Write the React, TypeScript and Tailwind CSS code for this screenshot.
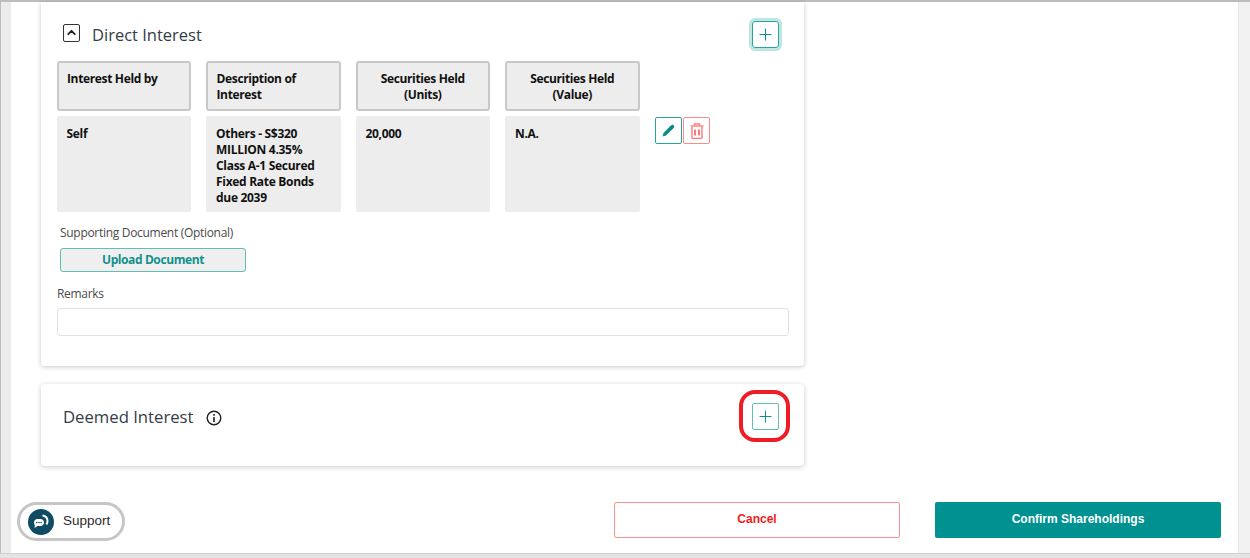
import React from "react";
import { ChevronUp, Plus, Pencil } from "lucide-react";

const headers = [
  { label: "Interest Held by", left: true },
  { label: "Description of Interest", left: true },
  { label: "Securities Held (Units)", left: false },
  { label: "Securities Held (Value)", left: false },
];

const row = ["Self", "Others - S$320 MILLION 4.35% Class A-1 Secured Fixed Rate Bonds due 2039", "20,000", "N.A."];

const TrashIcon = () => (
  <svg width="14" height="16" viewBox="0 0 14 16" fill="none" stroke="#ff7b7b" strokeWidth="1.4">
    <path d="M0.5 3h13" />
    <path d="M4.5 2.6V1h5v1.6" />
    <path d="M2 3.4v11c0 .6.4 1 1 1h8c.6 0 1-.4 1-1v-11" />
    <path d="M5 6.5v6M9 6.5v6" strokeWidth="2" />
  </svg>
);

const SupportIcon = () => (
  <svg width="26" height="26" viewBox="0 0 26 26">
    <circle cx="13" cy="13" r="13" fill="#0f4c64" />
    <path d="M6 13.500c0-2 1.500-3.500 3.500-3.500h3c2 0 3.500 1.500 3.500 3.500s-1.500 3.500-3.500 3.500h-3L6.500 19l.4-3C6.300 15.400 6 14.500 6 13.500z" fill="#ffffff" />
    <circle cx="8.800" cy="13.500" r=".8" fill="#0f4c64" />
    <circle cx="11" cy="13.500" r=".8" fill="#0f4c64" />
    <circle cx="13.200" cy="13.500" r=".8" fill="#0f4c64" />
    <path d="M14.500 6.500c3 .4 5 2.600 5 5.500 0 1.300-.4 2.500-1.100 3.500" fill="none" stroke="#ffffff" strokeWidth="2" />
  </svg>
);

const App: React.FC = () => {
  return (
    <div className="w-[1250px] h-[558px] overflow-hidden flex flex-col bg-[#ececec] font-['Open_Sans',sans-serif]">
      <div className="h-[2px] bg-[#bdbdbd] shrink-0" />
      <div className="flex flex-1 min-h-0">
        <div className="w-[1px] bg-[#bdbdbd] shrink-0" />
        <div className="w-[10px] bg-[#ececec] shrink-0" />
        <div className="w-[1227px] bg-white flex flex-col">
          <div className="ml-[30px] w-[763px] h-[364px] bg-white rounded-b-[4px] shadow-[0_1px_5px_rgba(0,0,0,0.22)] pl-[16px] pt-[17px]">
            <div className="flex items-center h-[30px] pr-[25px] justify-between">
              <div className="flex items-center pl-[6px] mt-[2px]">
                <span className="w-[17px] h-[18px] border border-[#333] rounded-[2px] flex items-center justify-center mb-[5px]">
                  <ChevronUp size={13} strokeWidth={3.5} className="text-[#222]" />
                </span>
                <span className="ml-[12px] text-[16.5px] text-[#333d47]">Direct Interest</span>
              </div>
              <button className="w-[27px] h-[27px] border border-[#2aa39e] rounded-[3px] ring-[3px] ring-[#bfe6e4] flex items-center justify-center">
                <Plus size={19} strokeWidth={1.4} className="text-[#12918d]" />
              </button>
            </div>

            <div className="flex mt-[12px] -ml-[0.5px]">
              <div className="grid grid-cols-[134.5px_134.5px_134.5px_134.5px] gap-x-[15px] gap-y-[5px]">
                {headers.map((h) => (
                  <div
                    key={h.label}
                    className={`h-[50px] bg-[#ededed] border-2 border-[#c8c8c8] rounded-[3px] px-[8.5px] pt-[8px] text-[12px] tracking-[-0.35px] leading-[16px] font-bold text-[#111] ${h.left ? "text-left" : "text-center"}`}
                  >
                    {h.label}
                  </div>
                ))}
                {row.map((c) => (
                  <div key={c} className="h-[96px] bg-[#ededed] rounded-[2px] pl-[10px] pr-[8px] pt-[10px] text-[12px] tracking-[-0.3px] leading-[16px] font-bold text-[#111]">
                    {c}
                  </div>
                ))}
              </div>
              <div className="flex gap-[1px] ml-[15.5px] mt-[56px] h-[27px]">
                <button className="w-[27px] h-[27px] border border-[#2aa39e] rounded-[2px] flex items-center justify-center">
                  <Pencil size={13} fill="#0b8a86" strokeWidth={1.5} className="text-[#0b8a86]" />
                </button>
                <button className="w-[27px] h-[27px] border border-[#ff8a8a] rounded-[2px] flex items-center justify-center">
                  <TrashIcon />
                </button>
              </div>
            </div>

            <div className="ml-[3px] mt-[13px] text-[12px] tracking-[-0.3px] leading-[16px] text-[#4a4a4a]">Supporting Document (Optional)</div>
            <button className="ml-[3px] mt-[7px] block w-[186px] h-[24px] bg-[#efefef] border border-[#62bcb8] rounded-[3px] text-[12px] tracking-[-0.4px] font-bold text-[#12918d]">
              Upload Document
            </button>
            <div className="mt-[14px] text-[12px] tracking-[-0.3px] leading-[16px] text-[#4a4a4a]">Remarks</div>
            <div className="mt-[6px] w-[732px] h-[28px] border border-[#e2e2e2] rounded-[3px]" />
          </div>

          <div className="ml-[30px] mt-[18px] w-[763px] h-[82px] bg-white rounded-[4px] shadow-[0_1px_5px_rgba(0,0,0,0.22)] pl-[22px] pr-[25px] pt-[19px] flex justify-between items-start">
            <div className="flex items-center h-[28px]">
              <span className="text-[16.7px] text-[#333d47]">Deemed Interest</span>
              <svg className="ml-[12px] mt-[2px]" width="16" height="16" viewBox="0 0 16 16" fill="none" stroke="#222" strokeWidth="1.400">
                <circle cx="8" cy="8" r="6.800" />
                <path d="M8 7v5" strokeWidth="1.600" />
                <path d="M8 4v1.800" strokeWidth="1.600" />
              </svg>
            </div>
            <div className="relative">
              <button className="w-[27px] h-[27px] border border-[#62bcb8] rounded-[2px] flex items-center justify-center">
                <Plus size={19} strokeWidth={1.3} className="text-[#12918d]" />
              </button>
              <span className="absolute -left-[13px] -top-[13px] w-[51px] h-[52px] border-[4px] border-[#ee1c25] rounded-[16px]" />
            </div>
          </div>

          <div className="flex-1 flex items-start pl-[6px] pr-[17px] pt-[36px] font-['Liberation_Sans',sans-serif]">
            <div className="w-[108px] h-[39px] border-[3px] border-[#c6c6c6] rounded-full flex items-center pl-[8px] text-[#2b2b2b] text-[13.5px]">
              <SupportIcon />
              <span className="ml-[9px]">Support</span>
            </div>
            <button className="ml-[489px] w-[286px] h-[36px] bg-white border border-[#ff8f8f] rounded-[2px] pb-[2px] text-[12px] font-bold text-[#f01c1c]">
              Cancel
            </button>
            <button className="ml-[35px] w-[286px] h-[36px] bg-[#009191] rounded-[2px] pb-[2px] text-[12px] font-bold text-white">
              Confirm Shareholdings
            </button>
          </div>
        </div>
        <div className="flex-1 bg-[#f2f2f2] border-l border-[#e8e8e8]" />
      </div>
      <div className="h-[5px] bg-[#e4e4e4] border-t border-[#d0d0d0] shrink-0" />
    </div>
  );
};

export default App;
